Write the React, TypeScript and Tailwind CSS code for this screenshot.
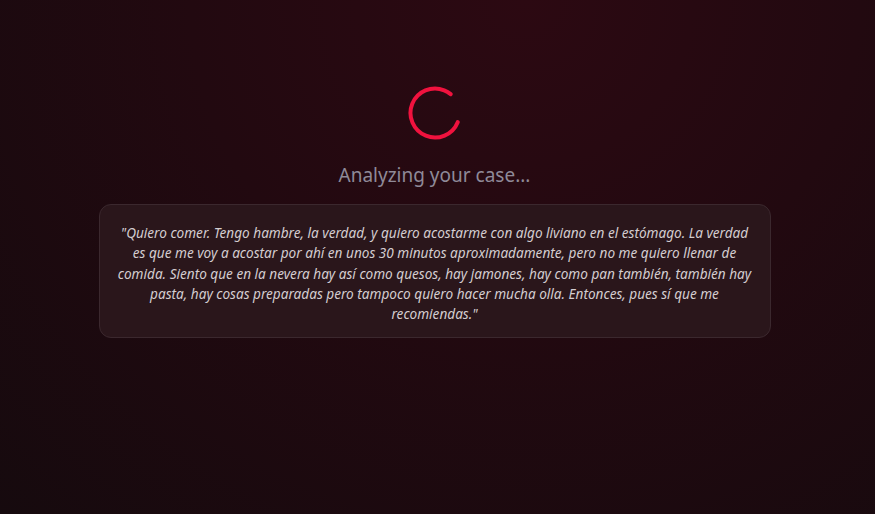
import React from "react";

function Spinner() {
  const r = 24.5;
  const c = 2 * Math.PI * r;
  const arc = c * (286 / 360);
  return (
    <svg width="56" height="56" viewBox="0 0 56 56" className="block">
      <circle
        cx="28"
        cy="28"
        r={r}
        fill="none"
        stroke="#f0123e"
        strokeWidth="4"
        strokeLinecap="round"
        strokeDasharray={`${arc} ${c}`}
        transform="rotate(22 28 28)"
      />
    </svg>
  );
}

const lines = [
  "\"Quiero comer. Tengo hambre, la verdad, y quiero acostarme con algo liviano en el estómago. La verdad",
  "es que me voy a acostar por ahí en unos 30 minutos aproximadamente, pero no me quiero llenar de",
  "comida. Siento que en la nevera hay así como quesos, hay jamones, hay como pan también, también hay",
  "pasta, hay cosas preparadas pero tampoco quiero hacer mucha olla. Entonces, pues sí que me",
  "recomiendas.\"",
];

export default function App() {
  return (
    <div
      className="min-h-[514px] w-full bg-[radial-gradient(ellipse_at_60%_0%,#2c0912_0%,#220910_45%,#160a0e_100%)] flex flex-col items-center pt-[85px] pr-[6px]"
      style={{ fontFamily: '"Noto Sans", "Open Sans", sans-serif' }}
    >
      <Spinner />
      <div className="mt-[21px] text-[19px] leading-[26px] text-[#8f8a98]">
        Analyzing your case...
      </div>
      <div className="mt-[16px] w-[672px] rounded-xl border border-[#3b282e] bg-[#2a161b] px-[12px] pt-[18px] pb-[13px]">
        <p className="text-center italic text-[13.6px] leading-[20.3px] text-[#d4cdd0] whitespace-nowrap">
          {lines.map((l, i) => (
            <span key={i} className="block">
              {l}
            </span>
          ))}
        </p>
      </div>
    </div>
  );
}
